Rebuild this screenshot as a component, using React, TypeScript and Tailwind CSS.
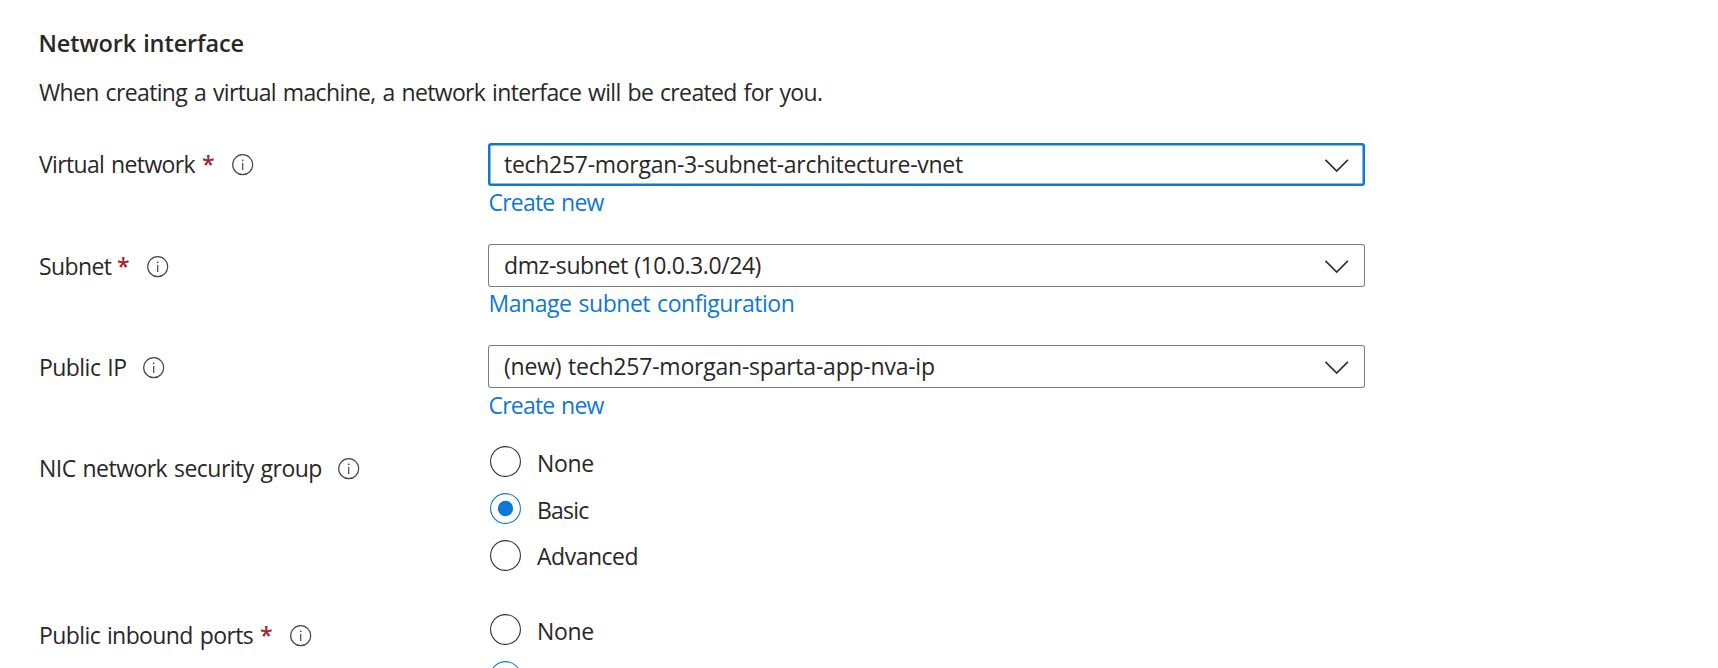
import type { ReactNode } from "react";

function InfoIcon() {
  return (
    <svg className="mt-[11px] h-[22px] w-[22px] shrink-0" viewBox="0 0 22 22" fill="none">
      <circle cx="10.7" cy="10.7" r="10" stroke="#484644" strokeWidth="1.2" />
      <circle cx="10.7" cy="6.3" r="0.85" fill="#484644" />
      <path d="M10.7 8.9V16" stroke="#484644" strokeWidth="1.2" />
    </svg>
  );
}

function Label({ text, className, required }: { text: string; className: string; required?: boolean }) {
  return (
    <div className="flex w-[450px] shrink-0">
      <span className={`shrink-0 whitespace-nowrap pl-px pt-1.5 ${className}`}>{text}</span>
      {required && <span className="w-[30px] shrink-0 pt-1.5 font-semibold text-[#a4262c]">*</span>}
      <InfoIcon />
    </div>
  );
}

function Select({ text, className, focused }: { text: string; className: string; focused?: boolean }) {
  return (
    <div
      className={`flex w-[877px] justify-between rounded-[3px] ${
        focused ? "h-[43px] shadow-[inset_0_0_0_2.5px_#0f78d4]" : "h-[43px] shadow-[inset_0_0_0_1px_#7f7d7b]"
      }`}
    >
      <span className={`whitespace-nowrap pl-4 pt-1.5 ${className}`}>{text}</span>
      <svg className="mr-4 mt-[15px] h-[15px] w-[25px]" viewBox="0 0 25 15" fill="none">
        <path d="M1.5 1.8L12.7 13L23.9 1.8" stroke="#323130" strokeWidth="1.7" />
      </svg>
    </div>
  );
}

function Link({ text, className }: { text: string; className: string }) {
  return <a className={`block w-fit whitespace-nowrap text-[#0f78d4] ${className}`}>{text}</a>;
}

function Radio({ text, className, checked }: { text?: string; className?: string; checked?: boolean }) {
  return (
    <div className="flex h-[46.7px] shrink-0 pl-0.5">
      <svg className="h-[31px] w-[31px] shrink-0" viewBox="0 0 31 31" fill="none">
        <circle cx="15.5" cy="15.5" r="14.9" stroke={checked ? "#0f78d4" : "#323130"} strokeWidth="1.1" />
        {checked && <circle cx="15.5" cy="15.5" r="7.7" fill="#0f78d4" />}
      </svg>
      <span className={`whitespace-nowrap pl-4 pt-[1.5px] ${className ?? ""}`}>{text}</span>
    </div>
  );
}

function Row({ className, children }: { className: string; children: ReactNode }) {
  return <div className={`flex shrink-0 ${className}`}>{children}</div>;
}

export default function App() {
  return (
    <main className="flex h-[668px] w-full flex-col overflow-hidden bg-white pl-[38px] pt-7 font-['Open_Sans','Noto_Sans',sans-serif] text-[23px] leading-[30px] text-[#292827]">
      <h2 className="ml-[0.5px] shrink-0 text-[23.5px] font-semibold tracking-[-0.1px] [word-spacing:1px]">Network interface</h2>
      <p className="ml-px mt-[19px] shrink-0 whitespace-nowrap tracking-[-0.646px] [word-spacing:1.5px]">
        When creating a virtual machine, a network interface will be created for you.
      </p>

      <Row className="mt-9 h-[101px]">
        <Label text="Virtual network" className="w-[164px] tracking-[-0.647px] [word-spacing:1.5px]" required />
        <div>
          <Select text="tech257-morgan-3-subnet-architecture-vnet" className="tracking-[-0.287px]" focused />
          <Link text="Create new" className="mt-px pl-[0.5px] tracking-[-0.8px] [word-spacing:1.5px]" />
        </div>
      </Row>

      <Row className="h-[101px]">
        <div className="pt-px">
          <Label text="Subnet" className="w-[79px] tracking-[-0.62px]" required />
        </div>
        <div>
          <Select text="dmz-subnet (10.0.3.0/24)" className="tracking-[-0.42px] [word-spacing:1px]" />
          <Link text="Manage subnet configuration" className="mt-px pl-[0.5px] tracking-[-0.46px] [word-spacing:1.5px]" />
        </div>
      </Row>

      <Row className="h-[102px]">
        <div className="pt-px">
          <Label text="Public IP" className="w-[105px] tracking-[-0.55px] [word-spacing:1.5px]" />
        </div>
        <div>
          <Select text="(new) tech257-morgan-sparta-app-nva-ip" className="tracking-[-0.225px] [word-spacing:1px]" />
          <Link text="Create new" className="mt-0.5 pl-[0.5px] tracking-[-0.8px] [word-spacing:1.5px]" />
        </div>
      </Row>

      <Row className="h-[167px]">
        <Label text="NIC network security group" className="w-[300px] tracking-[-0.54px] [word-spacing:1.5px]" />
        <div className="-mt-[0.6px]">
          <Radio text="None" className="tracking-[-0.3px]" />
          <Radio text="Basic" className="tracking-[-0.8px]" checked />
          <Radio text="Advanced" className="tracking-[-0.489px]" />
        </div>
      </Row>

      <Row className="h-[94px]">
        <Label text="Public inbound ports" className="w-[222px] tracking-[-0.6px] [word-spacing:1.5px]" required />
        <div>
          <Radio text="None" className="tracking-[-0.3px]" />
          <Radio checked />
        </div>
      </Row>
    </main>
  );
}
